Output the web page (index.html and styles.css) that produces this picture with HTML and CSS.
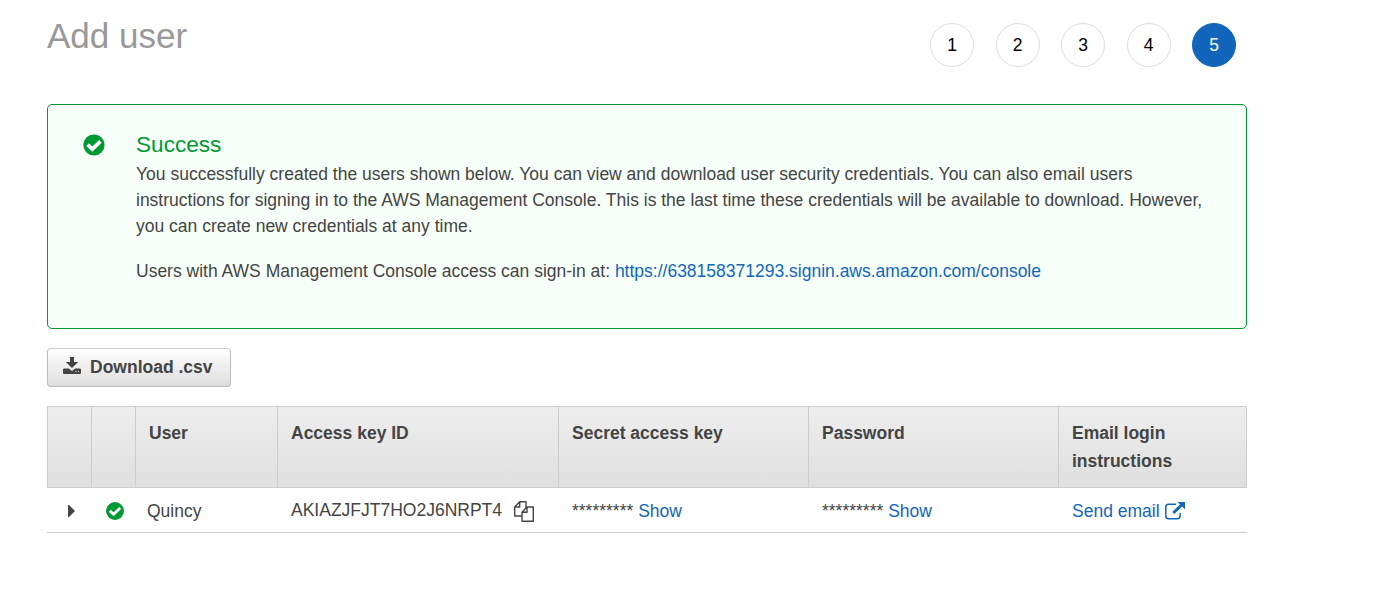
FILE: index.html
```html
<!DOCTYPE html>
<html lang="en">
<head>
<meta charset="utf-8">
<title>Add user</title>
<link rel="stylesheet" href="styles.css">
</head>
<body>
<main class="page">
  <header class="header">
    <h1 class="title">Add user</h1>
    <ol class="steps">
      <li class="step">1</li>
      <li class="step">2</li>
      <li class="step">3</li>
      <li class="step">4</li>
      <li class="step active">5</li>
    </ol>
  </header>

  <section class="alert">
    <svg class="alert-icon" viewBox="0 0 22 22"><circle cx="11" cy="11" r="10.600" fill="#093"/><path d="M4.600 10.600l4.700 4.500 8.100-7.800" fill="none" stroke="#fff" stroke-width="3.700"/></svg>
    <div class="alert-body">
      <h2 class="alert-title">Success</h2>
      <p class="alert-text">You successfully created the users shown below. You can view and download user security credentials. You can also email users<br>instructions for signing in to the AWS Management Console. This is the last time these credentials will be available to download. However,<br>you can create new credentials at any time.</p>
      <p class="alert-text">Users with AWS Management Console access can sign-in at: <a class="link" href="#">https://638158371293.signin.aws.amazon.com/console</a></p>
    </div>
  </section>

  <button class="download" type="button">
    <svg class="download-icon" viewBox="0 0 18 17"><path fill="#444" fill-rule="evenodd" d="M7 0h4v5h4.200L9 11 2.800 5H7zM1 11.500h4.800L9 14l3.200-2.500H17q1 0 1 1V16q0 1-1 1H1q-1 0-1-1v-3.500q0-1 1-1zM12.500 14v1h1v-1zm2.500 0v1h1v-1z"/></svg>
    <span>Download .csv</span>
  </button>

  <table class="users">
    <colgroup><col class="c-expand"><col class="c-status"><col class="c-user"><col class="c-key"><col class="c-secret"><col class="c-pass"><col class="c-email"></colgroup>
    <thead>
      <tr><th></th><th></th><th>User</th><th>Access key ID</th><th>Secret access key</th><th>Password</th><th>Email login instructions</th></tr>
    </thead>
    <tbody>
      <tr>
        <td class="icon-cell"><svg class="caret" viewBox="0 0 7 12"><path fill="#444" d="M0 0h1l6 6-6 6H0z"/></svg></td>
        <td class="icon-cell"><svg class="status" viewBox="0 0 22 22"><circle cx="11" cy="11" r="10.900" fill="#093"/><path d="M4.600 10.600l4.700 4.500 8.100-7.800" fill="none" stroke="#fff" stroke-width="3.500"/></svg></td>
        <td class="name">Quincy</td>
        <td class="key"><span class="inline">AKIAZJFJT7HO2J6NRPT4<svg class="copy" viewBox="0 0 20 21"><path fill="#fff" stroke="#444" stroke-width="1.400" stroke-linejoin="round" d="M5.700.7H12V15H.7V6zM5.700.7V6H.7"/><path fill="#fff" stroke="#444" stroke-width="1.400" stroke-linejoin="round" d="M13 6h6.300v14.300H8V11.300zM13 6v5.300H8"/></svg></span></td>
        <td>********* <a class="link" href="#">Show</a></td>
        <td>********* <a class="link" href="#">Show</a></td>
        <td><a class="link inline" href="#">Send email<svg class="external" viewBox="0 0 20 18"><path d="M11 2.200H3.700Q.8 2.200.8 5v9q0 2.800 2.900 2.800h8.500q2.900 0 2.900-2.800v-3" fill="none" stroke="#1166bb" stroke-width="1.500"/><path d="M8.300 11L16.500 3" stroke="#1166bb" stroke-width="2.900"/><path d="M12.500 0H20v7.300z" fill="#1166bb"/></svg></a></td>
      </tr>
    </tbody>
  </table>
</main>
</body>
</html>
```
FILE: styles.css
```css
* { box-sizing: border-box; }
body {
  margin: 0;
  background: #fff;
  color: #444;
  font: 17.5px/26px "Liberation Sans", Arial, sans-serif;
}
.page { width: 1200px; margin-left: 47px; padding-top: 16px; }
.header { display: flex; justify-content: space-between; height: 88px; padding-right: 11px; }
.title { margin: 0; font-size: 35px; font-weight: 400; line-height: 39px; color: #999; }
.steps { display: flex; gap: 21.500px; margin: 7px 0 0; padding: 0; list-style: none; }
.step {
  width: 44px; height: 44px;
  border: 1px solid #ddd; border-radius: 50%;
  line-height: 42px; text-align: center; color: #000;
}
.active { background: #1166bb; border-color: #1166bb; color: #fff; }

.alert {
  display: flex; height: 225px; padding: 26px 35px 0;
  border: 1px solid #093; border-radius: 5px; background: #f7fff9;
}
.alert-icon { flex: none; width: 22px; height: 22px; margin: 3px 31px 0 0; }
.alert-body { white-space: nowrap; }
.alert-title { margin: 0 0 2px; font-size: 22.600px; font-weight: 400; line-height: 28px; color: #093; }
.alert-text { margin: 0 0 19px; }
.link { color: #1166bb; text-decoration: none; }

.download {
  display: flex; align-items: center; gap: 9px;
  width: 184px; height: 39px; margin: 19px 0; padding: 0 15px 2px;
  border: 1px solid #bbb; border-top-color: #ccc; border-radius: 4px;
  background: linear-gradient(#fff, #ddd);
  color: #444; font: bold 17.5px/26px "Liberation Sans", Arial, sans-serif; white-space: nowrap;
}
.download-icon { flex: none; width: 18px; height: 17px; margin-top: -3px; }

.users { width: 1200px; table-layout: fixed; border-collapse: separate; border-spacing: 0; }
.c-expand, .c-status { width: 44px; }
.c-user { width: 142px; }
.c-key { width: 281px; }
.c-secret, .c-pass { width: 250px; }
.c-email { width: 189px; }
.users thead tr { background: linear-gradient(#eee, #dfdfdf); }
.users th {
  height: 82px; padding: 12px 12px 0 13px; vertical-align: top;
  border: solid #ccc; border-width: 1px 0 1px 1px;
  text-align: left; line-height: 28px;
}
.users th:last-child { border-right-width: 1px; padding-right: 50px; }
.users td { height: 45px; padding: 2px 0 0 14px; border-bottom: 1px solid #ccc; white-space: nowrap; }
.users .key { padding-top: 0; }
.users .name { padding-left: 12px; }
.users .icon-cell { padding: 2px 0 0; text-align: center; line-height: 0; }
.caret { width: 7px; height: 12px; margin-left: 4px; }
.status { width: 18px; height: 18px; margin-left: 3px; }
.inline { display: flex; align-items: center; }
.copy { width: 20px; height: 21px; margin: 2px 0 0 12px; }
.external { width: 20px; height: 18px; margin-left: 5px; }
```
